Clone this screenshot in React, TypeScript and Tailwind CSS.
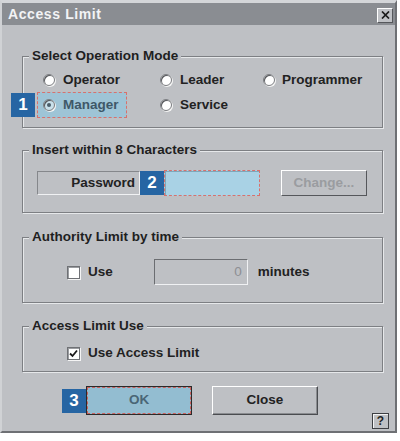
import React from "react"

const font = { fontFamily: '"Liberation Sans", Arial, sans-serif' }

function Radio({ checked, tint }: { checked?: boolean; tint?: boolean }) {
  return (
    <span
      className={`flex items-center justify-center w-[12px] h-[12px] rounded-full border border-[#7a7c80] shadow-[inset_1px_1px_0_#55575b,1px_1px_0_#f4f4f4] ${
        tint ? "bg-[#c9e0ea]" : "bg-white"
      }`}
    >
      {checked && <span className="w-[4px] h-[4px] rounded-full bg-[#4a5d6a]" />}
    </span>
  )
}

function Check({ checked }: { checked?: boolean }) {
  return (
    <span className="flex items-center justify-center w-[13px] h-[13px] bg-white border border-[#6f7175] shadow-[inset_1px_1px_0_#9a9ca0,1px_1px_0_#f4f4f4]">
      {checked && (
        <svg width="9" height="9" viewBox="0 0 9 9">
          <path d="M1 4.5 L3.5 7 L8 1.5" stroke="#1a1a1a" strokeWidth="1.8" fill="none" />
        </svg>
      )}
    </span>
  )
}

function Badge({ n }: { n: number }) {
  return (
    <span className="flex items-center justify-center w-[24px] h-[24px] bg-[#2665a3] text-white text-[17px] font-bold">
      {n}
    </span>
  )
}

function Group({ title, className, children }: { title: string; className?: string; children: React.ReactNode }) {
  return (
    <fieldset
      className={`mx-[20px] w-[361px] border border-[#7d7f83] shadow-[inset_1px_1px_0_#e6e8ea,1px_1px_0_#e6e8ea] ${className ?? ""}`}
    >
      <legend className="ml-[6px] px-[3px] bg-[#bec0c4] leading-[16px] text-[13.5px] font-bold text-[#1f1f1f]">
        {title}
      </legend>
      {children}
    </fieldset>
  )
}

export default function App() {
  return (
    <div className="w-[400px] h-[441px] bg-white" style={font}>
      <div className="w-[397px] h-[433px] bg-[#bec0c4] border-t-[3px] border-t-[#d4d6d9] border-l-[2px] border-l-[#d0d2d5] border-r-[2px] border-r-[#6e7074] border-b-[2px] border-b-[#6e7074] flex flex-col">
        {/* Title bar */}
        <div className="h-[22px] bg-[#8a8d92] flex items-center justify-between pl-[6px] pr-[2px]">
          <span className="text-[#f2f3f5] text-[14px] font-bold tracking-[0.6px]">Access Limit</span>
          <span className="w-[16px] h-[15px] mt-[2px] bg-[#bfc1c5] border border-t-white border-l-white border-r-[#55575b] border-b-[#55575b] flex items-center justify-center">
            <svg width="9" height="8" viewBox="0 0 9 8">
              <path d="M1 0.5 L8 7.5 M8 0.5 L1 7.5" stroke="#1a1a1a" strokeWidth="1.7" />
            </svg>
          </span>
        </div>

        {/* Select Operation Mode */}
        <Group title="Select Operation Mode" className="mt-[23px] h-[80px]">
          <div className="grid grid-cols-[121px_103px_1fr] grid-rows-[24px_26px] mt-[4px] ml-[14px] text-[13.5px] font-bold text-[#222]">
            <div className="flex items-center gap-[8px] pl-[6px]">
              <Radio />
              <span>Operator</span>
            </div>
            <div className="flex items-center gap-[8px] pl-[2px]">
              <Radio />
              <span>Leader</span>
            </div>
            <div className="flex items-center gap-[7px] pl-[2px]">
              <Radio />
              <span>Programmer</span>
            </div>
            <div className="relative flex items-center">
              <span className="absolute left-[-26px] top-[1px]">
                <Badge n={1} />
              </span>
              <div className="flex items-center gap-[8px] pl-[5px] w-[90px] h-[26px] bg-[#9ec4d6] border border-dashed border-[#d8716c] text-[#3e5868]">
                <Radio checked tint />
                <span>Manager</span>
              </div>
            </div>
            <div className="flex items-center gap-[8px] pl-[2px]">
              <Radio />
              <span>Service</span>
            </div>
          </div>
        </Group>

        {/* Password */}
        <Group title="Insert within 8 Characters" className="mt-[14px] h-[71px]">
          <div className="flex items-center mt-[12px] ml-[14px] h-[26px] text-[13.5px] font-bold text-[#222]">
            <div className="w-[103px] h-[24px] border border-t-[#85878b] border-l-[#85878b] border-r-[#f0f1f3] border-b-[#f0f1f3] flex items-center justify-end pr-[4px]">
              Password
            </div>
            <Badge n={2} />
            <div className="w-[96px] h-[26px] bg-[#a9d2e5] border border-dashed border-[#d8716c] shadow-[inset_1px_1px_0_#7fa7ba]" />
            <div className="ml-[21px] w-[86px] h-[26px] border border-t-white border-l-white border-r-[#55575b] border-b-[#55575b] flex items-center justify-center text-[#9a9ca0]">
              Change...
            </div>
          </div>
        </Group>

        {/* Authority limit */}
        <Group title="Authority Limit by time" className="mt-[16px] h-[74px]">
          <div className="flex items-center mt-[14px] h-[26px] text-[13.5px] font-bold text-[#222]">
            <span className="ml-[44px]">
              <Check />
            </span>
            <span className="ml-[8px]">Use</span>
            <div className="ml-[41px] w-[94px] h-[26px] border border-t-[#6b6d71] border-l-[#6b6d71] border-r-[#f0f1f3] border-b-[#f0f1f3] flex items-center justify-end pr-[5px] font-normal text-[#8d8f93]">
              0
            </div>
            <span className="ml-[10px]">minutes</span>
          </div>
        </Group>

        {/* Access limit use */}
        <Group title="Access Limit Use" className="mt-[15px] h-[54px]">
          <div className="flex items-center mt-[9px] h-[20px] text-[13.5px] font-bold text-[#222]">
            <span className="ml-[44px]">
              <Check checked />
            </span>
            <span className="ml-[8px]">Use Access Limit</span>
          </div>
        </Group>

        {/* Buttons */}
        <div className="flex items-center mt-[14px] h-[29px] text-[13.5px] font-bold">
          <span className="ml-[60px]">
            <Badge n={3} />
          </span>
          <div className="w-[106px] h-[29px] bg-[#93bdd1] border border-[#2a2a2a] flex items-center justify-center text-[#4a6676]">
            <div className="w-full h-full border border-dashed border-[#c9605c] flex items-center justify-center">OK</div>
          </div>
          <div className="ml-[20px] w-[106px] h-[29px] border border-t-white border-l-white border-r-[#4a4c50] border-b-[#4a4c50] shadow-[inset_-1px_-1px_0_#8a8c90] flex items-center justify-center text-[#222]">
            Close
          </div>
        </div>
        <div className="flex justify-end pr-[6px] -mt-[2px]">
          <span className="w-[17px] h-[16px] border border-[#3d3f43] shadow-[inset_1px_1px_0_#f4f4f4] flex items-center justify-center text-[12px] font-bold text-[#222]">
            ?
          </span>
        </div>
      </div>
    </div>
  )
}
